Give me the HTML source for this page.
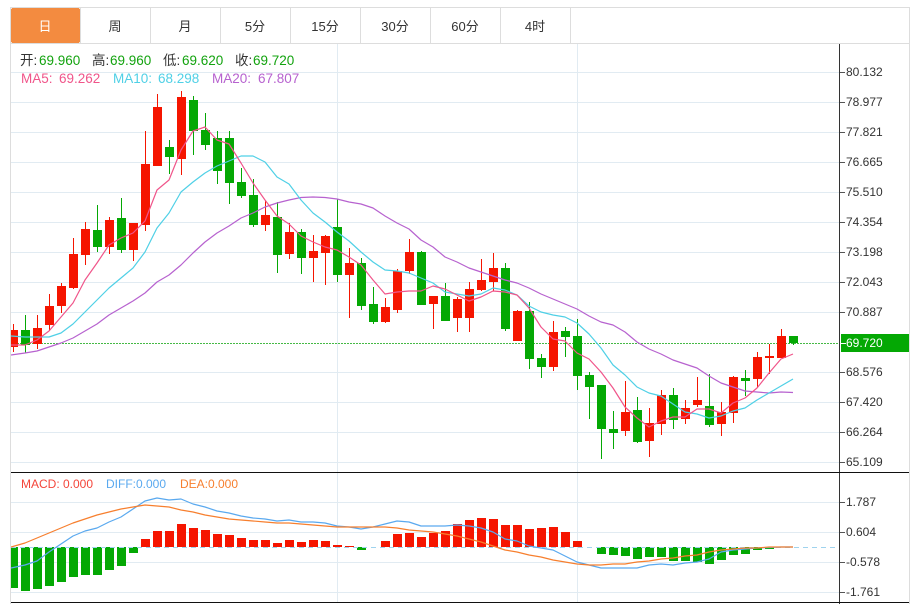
<!DOCTYPE html>
<html><head><meta charset="utf-8"><style>
html,body{margin:0;padding:0;background:#fff;width:917px;height:604px;overflow:hidden}
svg{display:block}
text{font-family:"Liberation Sans","Noto Sans CJK SC",sans-serif}
.t{font-size:13px;fill:#333;text-anchor:middle}
.a{font-size:12px;fill:#333}
</style></head><body>
<svg width="917" height="604" viewBox="0 0 917 604" xmlns="http://www.w3.org/2000/svg" shape-rendering="crispEdges">
<defs><clipPath id="c"><rect x="11" y="44" width="828" height="560"/></clipPath></defs>
<!-- frame -->
<rect x="10" y="7" width="900" height="1" fill="#dddddd"/>
<rect x="10" y="43" width="900" height="1" fill="#dddddd"/>
<rect x="10" y="7" width="1" height="597" fill="#dddddd"/>
<rect x="909" y="7" width="1" height="597" fill="#dddddd"/>
<rect x="11" y="8" width="69" height="35" rx="2" fill="#f38b40"/>
<path d="M80 8h1v35h-1zM150 8h1v35h-1zM220 8h1v35h-1zM290 8h1v35h-1zM360 8h1v35h-1zM430 8h1v35h-1zM500 8h1v35h-1zM570 8h1v35h-1z" fill="#dddddd"/>
<text class="t" x="45" y="31" style="fill:#fff">日</text>
<text class="t" x="115" y="31">周</text>
<text class="t" x="185" y="31">月</text>
<text class="t" x="255" y="31">5分</text>
<text class="t" x="325" y="31">15分</text>
<text class="t" x="395" y="31">30分</text>
<text class="t" x="465" y="31">60分</text>
<text class="t" x="535" y="31">4时</text>
<!-- grid -->
<path d="M11 72h828v1H11zM11 102h828v1H11zM11 132h828v1H11zM11 162h828v1H11zM11 192h828v1H11zM11 222h828v1H11zM11 252h828v1H11zM11 282h828v1H11zM11 312h828v1H11zM11 372h828v1H11zM11 402h828v1H11zM11 432h828v1H11zM11 462h828v1H11zM11 502h828v1H11zM11 532h828v1H11zM11 562h828v1H11zM11 592h828v1H11zM337 44h1v558h-1zM577 44h1v558h-1z" fill="#e1ebf2"/>
<line x1="11" y1="343.5" x2="839" y2="343.5" stroke="#45b945" stroke-dasharray="2 1" stroke-width="1"/>
<g clip-path="url(#c)">
<path fill="#f51500" d="M13 324h1v28h-1zM11 330h7v17h-7zM37 315h1v34h-1zM33 328h9v16h-9zM49 294h1v37h-1zM45 306h9v19h-9zM61 283h1v30h-1zM57 286h9v20h-9zM73 238h1v51h-1zM69 254h9v34h-9zM85 222h1v43h-1zM81 229h9v26h-9zM109 217h1v37h-1zM105 220h9v27h-9zM133 223h1v38h-1zM129 223h9v27h-9zM145 131h1v100h-1zM141 164h9v61h-9zM157 94h1v72h-1zM153 107h9v59h-9zM181 91h1v84h-1zM177 97h9v62h-9zM265 200h1v31h-1zM261 215h9v10h-9zM289 223h1v36h-1zM285 232h9v22h-9zM313 235h1v47h-1zM309 251h9v7h-9zM325 235h1v50h-1zM321 236h9v17h-9zM349 248h1v70h-1zM345 263h9v12h-9zM385 298h1v25h-1zM381 307h9v15h-9zM397 269h1v44h-1zM393 271h9v39h-9zM409 239h1v35h-1zM405 252h9v19h-9zM433 296h1v33h-1zM429 296h9v8h-9zM457 297h1v35h-1zM453 299h9v19h-9zM469 282h1v50h-1zM465 289h9v29h-9zM481 259h1v32h-1zM477 280h9v10h-9zM493 253h1v38h-1zM489 268h9v14h-9zM517 310h1v31h-1zM513 311h9v30h-9zM553 321h1v50h-1zM549 332h9v35h-9zM625 381h1v55h-1zM621 412h9v19h-9zM649 408h1v49h-1zM645 423h9v18h-9zM661 390h1v45h-1zM657 395h9v29h-9zM685 400h1v24h-1zM681 408h9v11h-9zM697 377h1v30h-1zM693 400h9v5h-9zM721 402h1v34h-1zM717 412h9v12h-9zM733 376h1v47h-1zM729 377h9v36h-9zM757 352h1v36h-1zM753 357h9v22h-9zM769 344h1v30h-1zM765 356h9v2h-9zM781 329h1v29h-1zM777 336h9v22h-9z"/>
<path fill="#04a804" d="M25 315h1v38h-1zM21 330h9v15h-9zM97 205h1v47h-1zM93 230h9v17h-9zM121 198h1v55h-1zM117 218h9v32h-9zM169 140h1v34h-1zM165 147h9v10h-9zM193 96h1v59h-1zM189 100h9v31h-9zM205 113h1v37h-1zM201 130h9v15h-9zM217 131h1v53h-1zM213 138h9v33h-9zM229 131h1v73h-1zM225 138h9v45h-9zM241 168h1v30h-1zM237 182h9v14h-9zM253 179h1v48h-1zM249 195h9v30h-9zM277 202h1v71h-1zM273 217h9v38h-9zM301 229h1v45h-1zM297 232h9v26h-9zM337 199h1v83h-1zM333 227h9v48h-9zM361 258h1v52h-1zM357 263h9v43h-9zM373 287h1v37h-1zM369 304h9v18h-9zM421 251h1v54h-1zM417 252h9v53h-9zM445 283h1v38h-1zM441 296h9v25h-9zM505 263h1v68h-1zM501 268h9v61h-9zM529 302h1v67h-1zM525 311h9v48h-9zM541 354h1v24h-1zM537 358h9v9h-9zM565 327h1v30h-1zM561 331h9v6h-9zM577 319h1v71h-1zM573 336h9v40h-9zM589 372h1v47h-1zM585 375h9v12h-9zM601 385h1v74h-1zM597 385h9v44h-9zM613 411h1v38h-1zM609 429h9v4h-9zM637 397h1v46h-1zM633 410h9v32h-9zM673 388h1v41h-1zM669 395h9v25h-9zM709 374h1v53h-1zM705 406h9v19h-9zM745 370h1v26h-1zM741 378h9v3h-9zM793 336h1v9h-1zM789 336h9v7h-9z"/>
<g fill="none" stroke-width="1.2" shape-rendering="geometricPrecision" stroke-linejoin="round">
<polyline stroke="#b762cf" points="11,355 25,353 37,351 49,347 61,343 73,338 85,331 97,324 109,315 121,308 133,301 145,293 157,282 169,275 181,265 193,253 205,242 217,233 229,226 241,218 253,213 265,207 277,203 289,200 301,197.5 313,197 325,197.5 337,199 349,202 361,204 373,208 385,216 397,223 409,229 421,240 433,247 445,257 457,262 469,268 481,272 493,276 505,280 517,283 529,288 541,294 553,299 565,304 577,309 589,316 601,322 613,325 625,332 637,342 649,349 661,354 673,360 685,364 697,368 709,376 721,383 733,387 745,391 757,392 769,393 781,392 793,392.5"/>
<polyline stroke="#4fd0e6" points="11,336 25,337 37,337 49,337 61,333 73,324 85,312 97,300 109,288 121,278 133,268 145,252 157,228 169,213 181,192 193,182 205,173 217,166 229,161 241,156 253,156 265,162 277,177 289,184 301,200 313,213 325,222 337,232 349,241 361,252 373,262 385,270 397,271 409,273 421,278 433,283 445,292 457,294 469,296 481,294 493,288 505,290 517,295 529,306 541,312 553,315 565,317 577,323 589,334 601,348 613,365 625,375 637,387 649,393 661,396 673,404 685,412 697,414 709,418 721,416 733,411 745,408 757,400 769,393 781,386 793,379"/>
<polyline stroke="#f0558a" points="11,345 25,345 37,340 49,331 61,317 73,303 85,280 97,263 109,245 121,238 133,233 145,221 157,190 169,180 181,150 193,131 205,127 217,140 229,144 241,163 253,183 265,200 277,216 289,224 301,236 313,242 325,247 337,250 349,257 361,265 373,280 385,294 397,292 409,291 421,291 433,286 445,289 457,295 469,301 481,297 493,291 505,292 517,295 529,308 541,327 553,339 565,341 577,353 589,359 601,372 613,388 625,407 637,418 649,427 661,421 673,417 685,417 697,409 709,409 721,413 733,403 745,398 757,388 769,373 781,359 793,354"/>
</g>
<path fill="#04a804" d="M11 547h7V588h-7zM21 547h9V591h-9zM33 547h9V589h-9zM45 547h9V586h-9zM57 547h9V582h-9zM69 547h9V577h-9zM81 547h9V575h-9zM93 547h9V575h-9zM105 547h9V570h-9zM117 547h9V566h-9zM129 547h9V553h-9zM357 547h9V550h-9zM597 547h9V554h-9zM609 547h9V555h-9zM621 547h9V556h-9zM633 547h9V559h-9zM645 547h9V557h-9zM657 547h9V557h-9zM669 547h9V561h-9zM681 547h9V561h-9zM693 547h9V562h-9zM705 547h9V564h-9zM717 547h9V560h-9zM729 547h9V555h-9zM741 547h9V554h-9zM753 547h9V550h-9zM765 547h9V549h-9z"/>
<path fill="#f51500" d="M141 539h9V547h-9zM153 531h9V547h-9zM165 531h9V547h-9zM177 524h9V547h-9zM189 528h9V547h-9zM201 530h9V547h-9zM213 534h9V547h-9zM225 535h9V547h-9zM237 538h9V547h-9zM249 540h9V547h-9zM261 540h9V547h-9zM273 543h9V547h-9zM285 540h9V547h-9zM297 542h9V547h-9zM309 540h9V547h-9zM321 541h9V547h-9zM333 545h9V547h-9zM345 546h9V547h-9zM381 541h9V547h-9zM393 534h9V547h-9zM405 533h9V547h-9zM417 537h9V547h-9zM429 533h9V547h-9zM441 531h9V547h-9zM453 524h9V547h-9zM465 520h9V547h-9zM477 518h9V547h-9zM489 519h9V547h-9zM501 525h9V547h-9zM513 525h9V547h-9zM525 529h9V547h-9zM537 528h9V547h-9zM549 527h9V547h-9zM561 532h9V547h-9zM573 541h9V547h-9z"/>
<line x1="11" y1="547.5" x2="838" y2="547.5" stroke="#9fd3ee" stroke-dasharray="5 4"/>
<g fill="none" stroke-width="1.2" shape-rendering="geometricPrecision" stroke-linejoin="round">
<polyline stroke="#5aa9ef" points="11,568 25,565 37,561 49,552 61,544 73,536 85,531 97,528 109,522 121,517 133,509 145,501 157,498 169,500 181,499 193,504 205,507 217,511 229,513 241,516 253,518 265,519 277,521 289,520 301,522 313,522 325,523 337,526 349,527 361,529 373,527 385,524 397,521 409,522 421,526 433,526 445,526 457,525 469,526 481,528 493,532 505,539 517,541 529,546 541,548 553,550 565,556 577,562 589,565 601,568 613,568 625,568 637,568 649,565 661,564 673,565 685,563 697,562 709,559 721,552 733,550 745,549 757,548 769,547.5 781,547 793,547"/>
<polyline stroke="#f77f2e" points="11,547 25,543 37,538 49,533 61,528 73,523 85,519 97,515 109,512 121,509 133,507 145,505 157,506 169,507 181,510 193,512 205,515 217,517 229,519 241,520 253,521 265,522 277,523 289,523 301,524 313,525 325,526 337,527 349,527 361,527 373,527 385,527 397,528 409,530 421,531 433,532 445,534 457,536 469,539 481,542 493,546 505,550 517,552 529,555 541,557 553,560 565,562 577,564 589,565 601,565 613,564 625,564 637,562 649,561 661,559 673,558 685,556 697,555 709,552 721,550 733,549 745,548 757,548 769,547 781,547 793,547"/>
</g>
</g>
<!-- axes -->
<rect x="11" y="472" width="828" height="1" fill="#111"/>
<rect x="11" y="602" width="828" height="1" fill="#111"/>
<rect x="839" y="44" width="1" height="560" fill="#333"/>
<rect x="839" y="472" width="70" height="1" fill="#111"/>
<rect x="839" y="602" width="70" height="1" fill="#111"/>
<path d="M840 72h5v1h-5zM840 102h5v1h-5zM840 132h5v1h-5zM840 162h5v1h-5zM840 192h5v1h-5zM840 222h5v1h-5zM840 252h5v1h-5zM840 282h5v1h-5zM840 312h5v1h-5zM840 372h5v1h-5zM840 402h5v1h-5zM840 432h5v1h-5zM840 462h5v1h-5zM840 502h5v1h-5zM840 532h5v1h-5zM840 562h5v1h-5zM840 592h5v1h-5z" fill="#555"/>
<rect x="841" y="334" width="68" height="18" fill="#04a804"/>
<rect x="841" y="343" width="5" height="1" fill="#fff"/>
<g shape-rendering="auto">
<text class="a" x="846" y="76">80.132</text>
<text class="a" x="846" y="106">78.977</text>
<text class="a" x="846" y="136">77.821</text>
<text class="a" x="846" y="166">76.665</text>
<text class="a" x="846" y="196">75.510</text>
<text class="a" x="846" y="226">74.354</text>
<text class="a" x="846" y="256">73.198</text>
<text class="a" x="846" y="286">72.043</text>
<text class="a" x="846" y="316">70.887</text>
<text class="a" x="846" y="347" style="fill:#fff">69.720</text>
<text class="a" x="846" y="376">68.576</text>
<text class="a" x="846" y="406">67.420</text>
<text class="a" x="846" y="436">66.264</text>
<text class="a" x="846" y="466">65.109</text>
<text class="a" x="846" y="506">1.787</text>
<text class="a" x="846" y="536">0.604</text>
<text class="a" x="846" y="566">-0.578</text>
<text class="a" x="846" y="596">-1.761</text>
<g font-size="13.5">
<text x="20" y="65" fill="#333">开:</text><text x="39" y="65" fill="#13a30f">69.960</text>
<text x="92" y="65" fill="#333">高:</text><text x="110" y="65" fill="#13a30f">69.960</text>
<text x="163" y="65" fill="#333">低:</text><text x="182" y="65" fill="#13a30f">69.620</text>
<text x="235" y="65" fill="#333">收:</text><text x="253" y="65" fill="#13a30f">69.720</text>
<text x="21" y="83" fill="#f0558a">MA5:</text><text x="59" y="83" fill="#f0558a">69.262</text>
<text x="113" y="83" fill="#4fd0e6">MA10:</text><text x="158" y="83" fill="#4fd0e6">68.298</text>
<text x="212" y="83" fill="#b762cf">MA20:</text><text x="258" y="83" fill="#b762cf">67.807</text>
</g>
<g font-size="12">
<text x="21" y="488" fill="#f4453a">MACD:</text><text x="63" y="488" fill="#f4453a">0.000</text>
<text x="106" y="488" fill="#5aa9ef">DIFF:</text><text x="136" y="488" fill="#5aa9ef">0.000</text>
<text x="180" y="488" fill="#f77f2e">DEA:</text><text x="208" y="488" fill="#f77f2e">0.000</text>
</g>
</g>
</svg>
</body></html>
